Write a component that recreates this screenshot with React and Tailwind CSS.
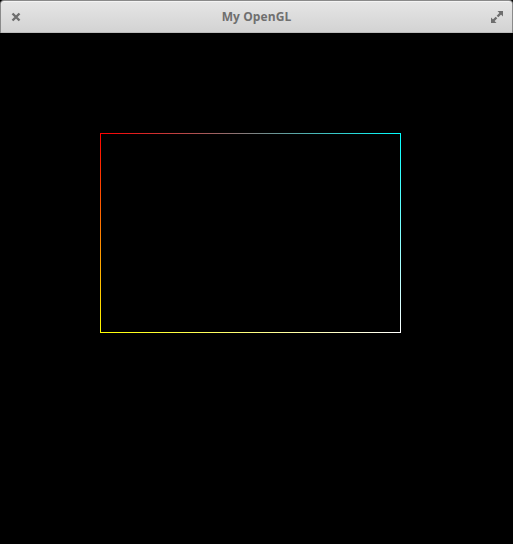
import React from 'react';

const edges = [
  { id: 'top', x1: 100.5, y1: 100.5, x2: 400.5, y2: 100.5, from: '#ff0000', to: '#00ffff' },
  { id: 'right', x1: 400.5, y1: 100.5, x2: 400.5, y2: 299.5, from: '#00ffff', to: '#ffffff' },
  { id: 'bottom', x1: 100.5, y1: 299.5, x2: 400.5, y2: 299.5, from: '#ffff00', to: '#ffffff' },
  { id: 'left', x1: 100.5, y1: 100.5, x2: 100.5, y2: 299.5, from: '#ff0000', to: '#ffff00' },
];

const App = () => {
  return (
    <div className="flex flex-col w-[513px] h-[544px] bg-black overflow-hidden">
      {/* Title bar */}
      <div className="relative h-[33px] shrink-0 flex items-center justify-center rounded-t-[4px] border border-b-0 border-[#8a8a8a] bg-gradient-to-b from-[#e6e6e6] to-[#d2d2d2] shadow-[inset_0_1px_0_#f4f4f4]">
        <div className="absolute left-[9px] top-[10px] w-3 h-3 flex items-center justify-center">
          <svg width="12" height="12" viewBox="0 0 12 12">
            <path d="M2.5 2.5 L9.5 9.5 M9.5 2.5 L2.5 9.5" stroke="#6e6e6e" strokeWidth="2.4" strokeLinecap="butt" />
          </svg>
        </div>
        <span className="text-[12px] font-bold text-[#6f6f6f] font-['Open_Sans',sans-serif] leading-none tracking-[0.1px]">
          My OpenGL
        </span>
        <div className="absolute right-[8px] top-[9px] w-[14px] h-[14px]">
          <svg width="14" height="14" viewBox="0 0 14 14">
            <path d="M7.5 1 H13 V6.5 Z" fill="#6e6e6e" />
            <path d="M1 7.5 V13 H6.5 Z" fill="#6e6e6e" />
            <path d="M11 3 L7.5 6.5 M3 11 L6.5 7.5" stroke="#6e6e6e" strokeWidth="2.4" />
          </svg>
        </div>
        <div className="absolute left-0 right-0 bottom-0 h-px bg-[#bdbdbd]" />
      </div>

      {/* GL canvas */}
      <div className="flex-1 bg-black">
        <svg width="513" height="511" viewBox="0 0 513 511" className="block">
          <defs>
            {edges.map((e) => (
              <linearGradient key={e.id} id={`g-${e.id}`} gradientUnits="userSpaceOnUse" x1={e.x1} y1={e.y1} x2={e.x2} y2={e.y2}>
                <stop offset="0" stopColor={e.from} />
                <stop offset="1" stopColor={e.to} />
              </linearGradient>
            ))}
          </defs>
          {edges.map((e) => (
            <line
              key={e.id}
              x1={e.x1 - (e.y1 === e.y2 ? 0.5 : 0)}
              y1={e.y1 - (e.x1 === e.x2 ? 0.5 : 0)}
              x2={e.x2 + (e.y1 === e.y2 ? 0.5 : 0)}
              y2={e.y2 + (e.x1 === e.x2 ? 0.5 : 0)}
              stroke={`url(#g-${e.id})`}
              strokeWidth="1"
            />
          ))}
        </svg>
      </div>
    </div>
  );
};

export default App;
